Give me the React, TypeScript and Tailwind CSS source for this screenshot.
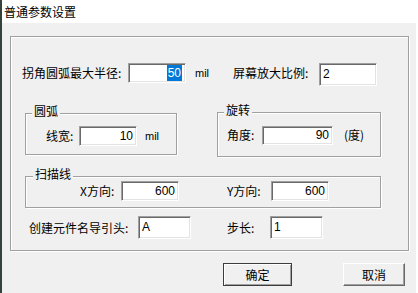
import React from 'react';

const cjk = { fontFamily: '"Noto Sans CJK SC", "Liberation Sans", sans-serif' };

const NumBox: React.FC<{ value: string; w: string; h?: string; selected?: boolean }> = ({ value, w, h = 'h-[20px]', selected }) => (
  <div
    className={`${w} ${h} shrink-0 bg-white border border-t-[#a0a0a0] border-l-[#a0a0a0] border-b-white border-r-white shadow-[inset_1px_1px_0_#696969,inset_-1px_-1px_0_#e3e3e3] flex items-center justify-end pr-[3px] text-[12px] font-['Liberation_Sans',sans-serif]`}
  >
    {selected ? <span className="bg-[#0078d7] text-white h-[16px] leading-[16px] px-[1px]">{value}</span> : <span>{value}</span>}
  </div>
);

const TextBox: React.FC<{ value: string; w: string }> = ({ value, w }) => (
  <div
    className={`${w} h-[23px] shrink-0 bg-white border border-t-[#a0a0a0] border-l-[#a0a0a0] border-b-white border-r-white shadow-[inset_1px_1px_0_#696969,inset_-1px_-1px_0_#e3e3e3] pl-[3px] pt-[2px] leading-[16px] text-[12px] font-['Liberation_Sans',sans-serif]`}
  >
    {value}
  </div>
);

const Label: React.FC<{ text: string; w: string }> = ({ text, w }) => (
  <div className={`${w} shrink-0 h-[20px] leading-[20px] text-[12px] whitespace-nowrap`} style={cjk}>
    {text}
  </div>
);

const Group: React.FC<{ title: string; legendLeft: string; className: string; children?: React.ReactNode }> = ({ title, legendLeft, className, children }) => (
  <div className={`relative shrink-0 border border-[#a0a0a0] shadow-[inset_1px_1px_0_#ffffff,1px_1px_0_#ffffff] ${className}`}>
    <span
      className={`absolute ${legendLeft} -top-[11px] px-[2px] bg-[#f0f0f0] text-[12px] leading-[16px]`}
      style={cjk}
    >
      {title}
    </span>
    {children}
  </div>
);

const Button: React.FC<{ text: string; w: string; isDefault?: boolean }> = ({ text, w, isDefault }) => (
  <div
    className={`${w} h-[23px] shrink-0 flex items-center justify-center text-[12px] bg-[#f0f0f0] border ${
      isDefault
        ? 'border-[#3c3c3c] shadow-[inset_1px_1px_0_#ffffff,inset_-1px_-1px_0_#a0a0a0]'
        : 'border-t-white border-l-white border-b-[#696969] border-r-[#696969] shadow-[inset_-1px_-1px_0_#a0a0a0]'
    }`}
    style={cjk}
  >
    {text}
  </div>
);

export default function App() {
  return (
    <div className="w-[418px] h-[293px] flex bg-[#f0f0f0] overflow-hidden text-black">
      <div className="w-[2px] shrink-0 bg-[#34423b]" />
      <div className="flex-1 flex flex-col">
        <div className="h-[23px] bg-white flex items-center pl-[2px] text-[12px]" style={cjk}>
          普通参数设置
        </div>

        <div className="flex-1 flex flex-col pl-[8px] pt-[13px]">
          <div className="w-[399px] h-[215px] shrink-0 border border-[#a0a0a0] shadow-[inset_1px_1px_0_#ffffff,1px_1px_0_#ffffff] flex flex-col">
            <div className="mt-[26px] h-[20px] flex items-start pl-[11px]">
              <Label text="拐角圆弧最大半径:" w="w-[106px]" />
              <NumBox value="50" w="w-[58px]" selected />
              <div className="w-[47px] shrink-0 pl-[9px] h-[20px] leading-[20px] text-[11px] font-['Liberation_Sans',sans-serif]">mil</div>
              <Label text="屏幕放大比例:" w="w-[86px]" />
              <TextBox value="2" w="w-[58px]" />
            </div>

            <div className="mt-[29px] flex items-start pl-[14px]">
              <Group title="圆弧" legendLeft="left-[6px]" className="mt-[1px] w-[152px] h-[42px]">
                <div className="mt-[12px] flex items-center pl-[20px]">
                  <Label text="线宽:" w="w-[33px]" />
                  <NumBox value="10" w="w-[58px]" />
                  <span className="ml-[8px] text-[11px] font-['Liberation_Sans',sans-serif]">mil</span>
                </div>
              </Group>
              <Group title="旋转" legendLeft="left-[6px]" className="ml-[40px] w-[164px] h-[45px]">
                <div className="mt-[12px] flex items-center pl-[9px]">
                  <Label text="角度:" w="w-[35px]" />
                  <NumBox value="90" w="w-[71px]" h="h-[19px]" />
                  <span className="ml-[11px] text-[12px]" style={cjk}>(度)</span>
                </div>
              </Group>
            </div>

            <div className="mt-[19px] pl-[14px] flex">
              <Group title="扫描线" legendLeft="left-[7px]" className="w-[356px] h-[32px]">
                <div className="mt-[4px] flex items-center pl-[54px]">
                  <Label text="X方向:" w="w-[41px]" />
                  <NumBox value="600" w="w-[58px]" />
                  <div className="ml-[48px] flex items-center">
                    <Label text="Y方向:" w="w-[44px]" />
                    <NumBox value="600" w="w-[58px]" />
                  </div>
                </div>
              </Group>
            </div>

            <div className="mt-[8px] flex items-center pl-[18px]">
              <Label text="创建元件名导引头:" w="w-[109px]" />
              <TextBox value="A" w="w-[53px]" />
              <div className="ml-[36px] flex items-center">
                <Label text="步长:" w="w-[43px]" />
                <TextBox value="1" w="w-[53px]" />
              </div>
            </div>
          </div>

          <div className="mt-[12px] flex pl-[213px]">
            <Button text="确定" w="w-[69px]" isDefault />
            <div className="ml-[51px]">
              <Button text="取消" w="w-[62px]" />
            </div>
          </div>
        </div>
      </div>
      <div className="w-[2px] shrink-0 bg-white" />
    </div>
  );
}
